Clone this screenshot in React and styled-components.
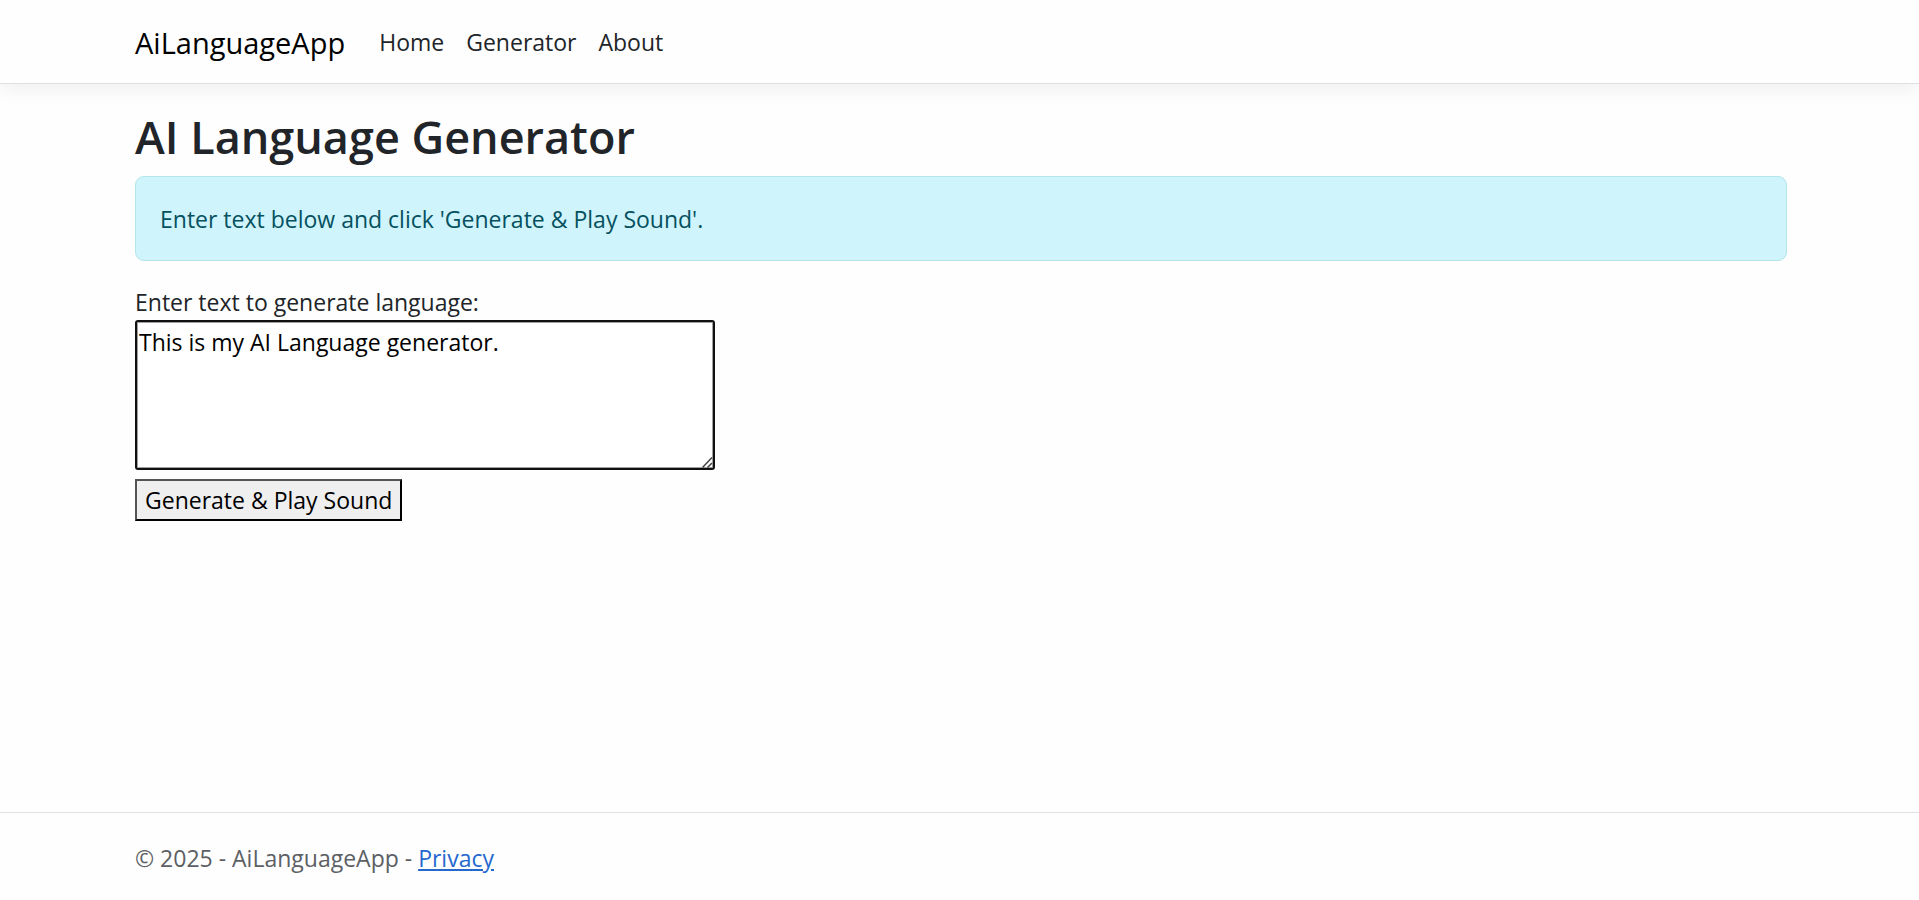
import React, { useState } from "react";
import styled, { createGlobalStyle } from "styled-components";

const GlobalStyle = createGlobalStyle`
  *, *::before, *::after { box-sizing: border-box; }
  body {
    margin: 0;
    background: #fefefe;
    color: #212529;
    font-family: "Segoe UI", "Open Sans", "Noto Sans", sans-serif;
    font-size: 23px;
    line-height: 35px;
  }
`;

const Page = styled.div`
  display: flex;
  flex-direction: column;
  min-height: 100vh;
`;

const Container = styled.div`
  padding: 0 132px 0 135px;
`;

const Header = styled.header`
  background: #fefefe;
  border-bottom: 1px solid #dee2e6;
  box-shadow: 0 6px 18px rgba(0, 0, 0, 0.06);
  padding: 25px 0 23px;
`;

const Navbar = styled(Container).attrs({ as: "nav" })`
  display: flex;
  align-items: center;
`;

const Brand = styled.a`
  margin-right: 34px;
  color: #000;
  font-size: 29px;
  text-decoration: none;
`;

const NavList = styled.ul`
  display: flex;
  gap: 22px;
  margin: 0;
  padding: 0;
  list-style: none;
`;

const NavLink = styled.a`
  color: #212529;
  text-decoration: none;
`;

const Main = styled(Container).attrs({ as: "main" })`
  flex: 1;
  padding-top: 24px;
`;

const Title = styled.h1`
  margin: 0 0 10px;
  font-size: 45px;
  font-weight: 600;
  line-height: 58px;
`;

const Alert = styled.div`
  margin-bottom: 24px;
  padding: 25px 24px 23px;
  border: 1px solid #b3e5e9;
  border-radius: 9px;
  background: #cff4fc;
  color: #055160;
`;

const Form = styled.form`
  display: flex;
  flex-direction: column;
  align-items: flex-start;
`;

const Field = styled.div`
  position: relative;
  display: flex;
  margin-bottom: 9px;
`;

const TextArea = styled.textarea`
  width: 580px;
  height: 150px;
  padding: 3px 2px;
  border: 2px solid #101010;
  border-radius: 3px;
  outline: none;
  box-shadow: inset 0 0 0 1px #a0a0a0;
  background: #fff;
  color: #000;
  font: inherit;
  resize: both;

  &::-webkit-resizer { display: none; }
`;

const Grip = styled.svg`
  position: absolute;
  right: 2px;
  bottom: 2px;
  pointer-events: none;
`;

const SubmitButton = styled.button`
  padding: 2px 8px 1px;
  border: 2px outset #000;
  border-radius: 0;
  background: #efefef;
  color: #000;
  font: inherit;
`;

const Footer = styled.footer`
  padding: 28px 0 24px;
  border-top: 1px solid #dee2e6;
  color: #5c6064;
`;

const FooterLink = styled.a`
  color: #2569cf;
`;

const navItems = ["Home", "Generator", "About"];

export default function App() {
  const [text, setText] = useState("This is my AI Language generator.");

  return (
    <Page>
      <GlobalStyle />
      <Header>
        <Navbar>
          <Brand href="#home">AiLanguageApp</Brand>
          <NavList>
            {navItems.map((item) => (
              <li key={item}>
                <NavLink href={"#" + item.toLowerCase()}>{item}</NavLink>
              </li>
            ))}
          </NavList>
        </Navbar>
      </Header>
      <Main>
        <Title>AI Language Generator</Title>
        <Alert role="alert">Enter text below and click 'Generate &amp; Play Sound'.</Alert>
        <Form onSubmit={(e) => e.preventDefault()}>
          <label htmlFor="inputText">Enter text to generate language:</label>
          <Field>
            <TextArea
              id="inputText"
              spellCheck={false}
              value={text}
              onChange={(e) => setText(e.target.value)}
            />
            <Grip width="11" height="11" viewBox="0 0 11 11" fill="none" stroke="#444" strokeWidth="1.5" aria-hidden="true">
              <path d="M0.5 10.5 10 0.5M5.5 10.5 10 6" />
            </Grip>
          </Field>
          <SubmitButton type="submit">Generate &amp; Play Sound</SubmitButton>
        </Form>
      </Main>
      <Footer>
        <Container>
          © 2025 - AiLanguageApp - <FooterLink href="#privacy">Privacy</FooterLink>
        </Container>
      </Footer>
    </Page>
  );
}
